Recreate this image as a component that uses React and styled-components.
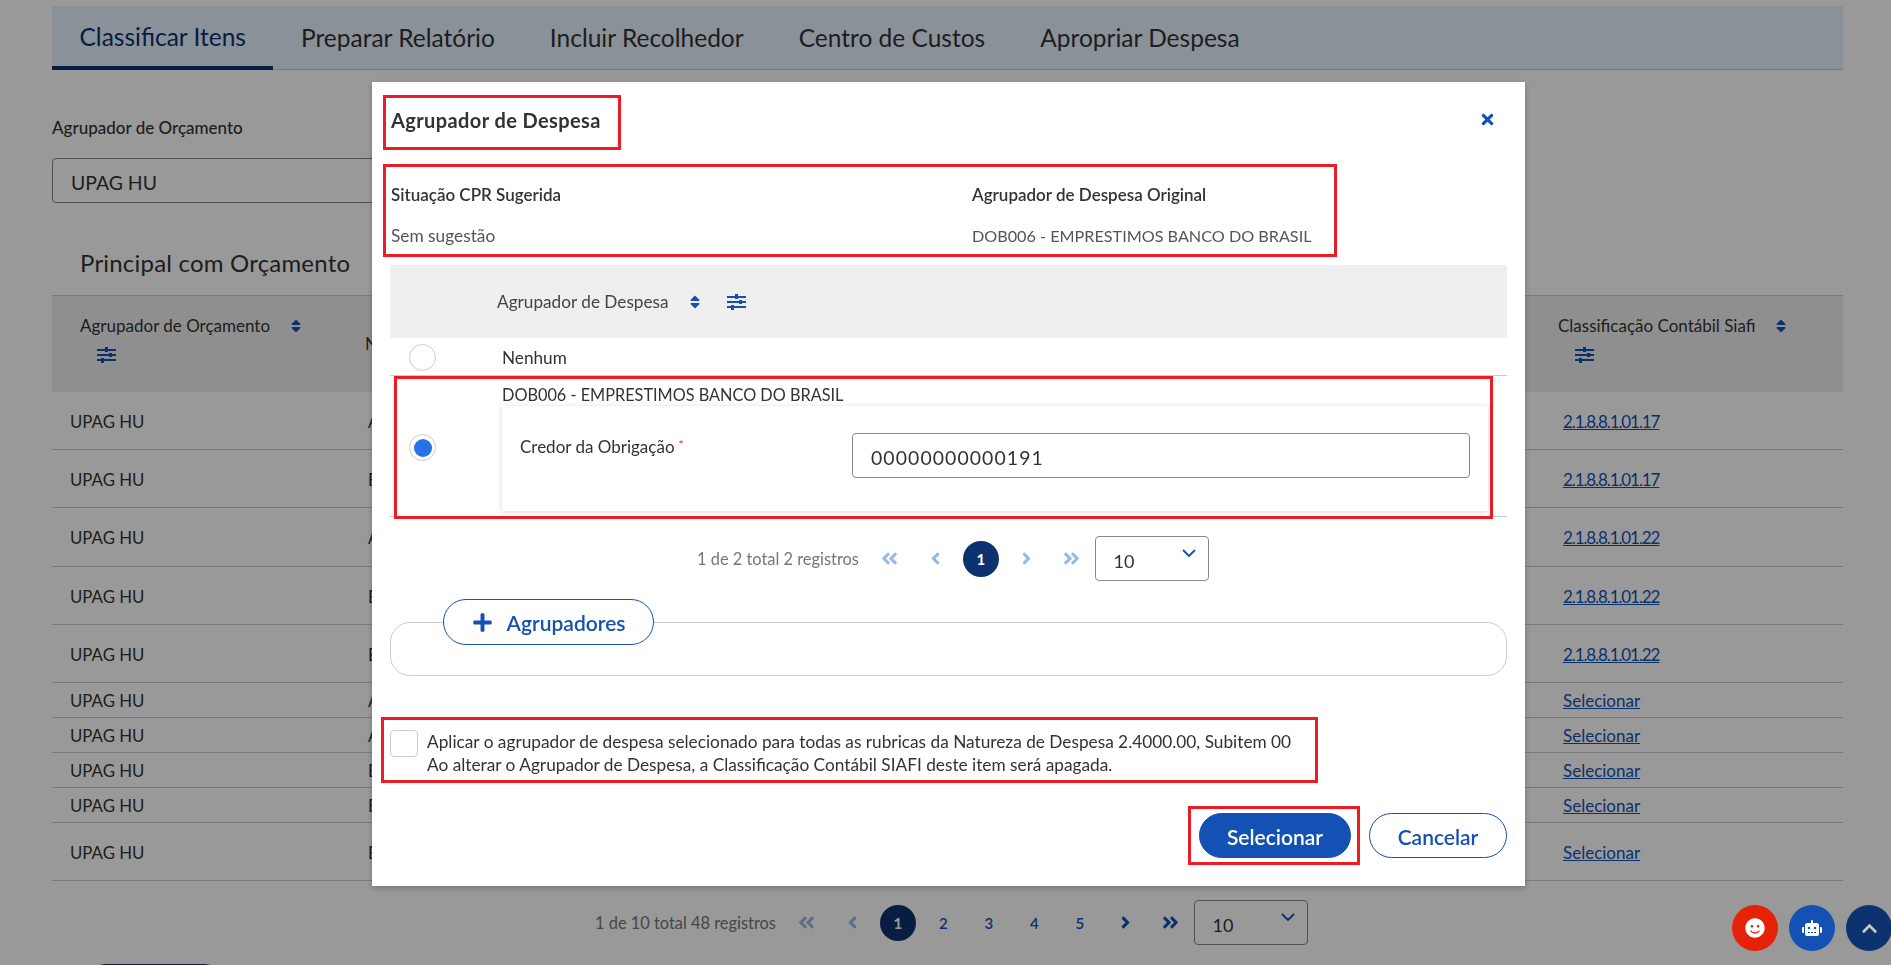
import React from "react";
import styled, { createGlobalStyle } from "styled-components";
import { FaAngleDoubleLeft, FaAngleDoubleRight, FaAngleLeft, FaAngleRight, FaChevronUp, FaPlus, FaRobot, FaSmile, FaSort, FaTimes } from "react-icons/fa";

const GlobalStyle = createGlobalStyle`
html, body {
    margin: 0;
    height: 100%;
    overflow: hidden;
    background: #fff;
}
* {
    box-sizing: border-box;
}
body, input, button {
    font-family: "Lato", "Open Sans", sans-serif;
    color: #333;
}
`

const BLUE = "#1351b4";
const RED = "#ed1c24";

const Page = styled.div`
width: 1891px;
height: 965px;
overflow: hidden;
padding: 6px 48px 0 52px;
`

const TabBar = styled.div`
display: flex;
height: 64px;
background: #e6f2fe;
border-bottom: 1px solid #ccc;
`

const Tab = styled.div`
display: flex;
align-items: center;
height: 64px;
padding: 0 27.5px ${props => props.$active ? "0" : "1px"};
font-size: 24.5px;
color: ${props => props.$active ? "#0c326f" : "#333"};
border-bottom: ${props => props.$active ? "4px solid #0c326f" : "none"};
`

const FieldLabel = styled.div`
margin-top: 47px;
font-size: 17px;
line-height: 22px;
font-weight: 500;
`

const TextBox = styled.div`
display: flex;
align-items: center;
width: 500px;
height: 45px;
margin-top: 19px;
padding: 3px 0 0 18px;
font-size: 19.4px;
border: 1px solid #888;
border-radius: 4px;
`

const SectionTitle = styled.h2`
margin: 46px 0 18px 28px;
font-size: 24px;
line-height: 28px;
font-weight: 400;
letter-spacing: 0.2px;
`

const HeadRow = styled.div`
display: grid;
grid-template-columns: 316px 1fr 313px;
height: 97px;
background: #efefef;
border-top: 1px solid #ccc;
font-size: 17px;
`

const HeadCell = styled.div`
padding: 20px 0 0 28px;
line-height: 20px;
`

const HeadPeek = styled.div`
margin: 38px 0 0 -3px;
line-height: 20px;
`

const SortMark = styled(FaSort)`
color: ${BLUE};
font-size: 16px;
vertical-align: -2px;
margin-left: 18px;
`

const FilterWrap = styled.div`
margin: 11px 0 0 17px;
height: 16px;
`

const Row = styled.div`
display: grid;
grid-template-columns: 316px 1fr 313px;
align-items: center;
height: ${props => props.$tall ? "58.2px" : "35px"};
padding-top: 2px;
border-bottom: 1px solid #ccc;
font-size: 16.8px;
`

const Cell = styled.div`
padding-left: 18px;
`

const CellPeek = styled.div`
padding-left: 0;
`

const CellLink = styled.a`
padding-left: 33px;
color: ${BLUE};
text-decoration: underline;
font-size: 17px;
letter-spacing: ${props => props.$code ? "-1.1px" : "0"};
`

const Pager = styled.div`
display: flex;
align-items: center;
height: 45px;
margin: ${props => props.$margin};
font-size: 16.4px;
`

const PagerInfo = styled.div`
width: ${props => props.$width};
color: #777;
`

const PagerSlot = styled.div`
display: flex;
align-items: center;
justify-content: center;
width: 45.5px;
font-size: ${props => props.$arrow ? "19px" : "15px"};
font-weight: 600;
color: ${props => props.$faded ? "#9ab8e4" : BLUE};
`

const PageDot = styled.div`
display: flex;
align-items: center;
justify-content: center;
width: 36px;
height: 36px;
border-radius: 50%;
background: #0c326f;
color: #fff;
font-size: 15px;
font-weight: 700;
`

const SizeSelect = styled.div`
display: flex;
justify-content: space-between;
width: 114px;
height: 45px;
padding: 0 12px 0 18px;
border: 1px solid #888;
border-radius: 4px;
font-size: 18px;
line-height: 48px;
`

const Chevron = styled.svg`
width: 14px;
height: 8px;
margin-top: 12px;
`

const BottomButton = styled.div`
width: 138px;
height: 40px;
margin: 19px 0 0 34px;
border-radius: 20px;
background: #0c326f;
`

const Overlay = styled.div`
position: fixed;
inset: 0;
padding: 82px 0 0 372px;
background: rgba(0, 0, 0, 0.4);
`

const Modal = styled.div`
width: 1153px;
height: 804px;
padding: 0 18px;
background: #fff;
box-shadow: 0 2px 6px rgba(0, 0, 0, 0.25);
`

const ModalHeader = styled.div`
display: flex;
justify-content: space-between;
align-items: flex-start;
padding: 13px 11px 0 0;
`

const TitleBox = styled.div`
display: flex;
align-items: center;
width: 238px;
height: 55px;
margin-left: -7px;
padding: 0 0 6px 5px;
border: 3px solid ${RED};
font-size: 20px;
font-weight: 700;
letter-spacing: 0.4px;
white-space: nowrap;
`

const CloseIcon = styled(FaTimes)`
margin-top: 16px;
color: ${BLUE};
font-size: 17px;
`

const InfoBox = styled.div`
display: grid;
grid-template-columns: 581px 1fr;
grid-template-rows: 41px 41px;
align-items: center;
width: 954px;
height: 93px;
margin: 14px 0 0 -7px;
padding: 7px 0 0 5px;
border: 3px solid ${RED};
`

const InfoLabel = styled.div`
font-size: 17px;
font-weight: 600;
`

const InfoValue = styled.div`
font-size: ${props => props.$caps ? "16.2px" : "17.3px"};
color: #555;
`

const PickHead = styled.div`
display: flex;
align-items: center;
height: 73px;
margin-top: 8px;
padding-left: 107px;
background: #efefef;
font-size: 17.2px;
color: #444;
`

const FilterGap = styled.span`
margin-left: 24px;
display: inline-flex;
`

const PickRow = styled.div`
display: flex;
align-items: center;
height: 38px;
padding: 1px 0 0 19px;
border-bottom: 1px solid #ccc;
font-size: 17.2px;
`

const Radio = styled.div`
display: flex;
align-items: center;
justify-content: center;
flex: none;
width: 27px;
height: 27px;
border: 1px solid #ccc;
border-radius: 50%;
background: #fff;
`

const RadioDot = styled.div`
width: 18px;
height: 18px;
border-radius: 50%;
background: #2670e8;
`

const PickLabel = styled.div`
margin-left: 66px;
`

const PickedRow = styled.div`
height: 141px;
border-bottom: 1px solid #ccc;
`

const PickedBox = styled.div`
display: flex;
align-items: center;
width: 1099px;
height: 143px;
margin-left: 4px;
padding: 0 2px 0 12px;
border: 3px solid ${RED};
`

const PickedBody = styled.div`
flex: 1;
margin-left: 66px;
align-self: flex-start;
padding-top: 5px;
`

const PickedName = styled.div`
font-size: 16.3px;
line-height: 22px;
`

const SubCard = styled.div`
display: flex;
align-items: flex-start;
height: 105px;
padding: 27px 18px 0;
background: #fff;
box-shadow: 0 1px 6px rgba(0, 0, 0, 0.16);
`

const SubLabel = styled.div`
width: 332px;
font-size: 17px;
line-height: 23px;
`

const Required = styled.span`
color: #e52207;
font-size: 12px;
vertical-align: 4px;
margin-left: 4px;
`

const SubInput = styled.div`
flex: 1;
display: flex;
align-items: center;
height: 45px;
padding: 3px 0 0 18px;
border: 1px solid #888;
border-radius: 4px;
font-size: 19.4px;
letter-spacing: 1.1px;
`

const GroupField = styled.div`
height: 54px;
margin-top: 41px;
padding-left: 52px;
border: 1px solid #ccc;
border-radius: 20px;
`

const AddButton = styled.button`
display: flex;
align-items: center;
justify-content: center;
gap: 14px;
width: 211px;
height: 46px;
margin-top: -24px;
background: #fff;
border: 1px solid ${BLUE};
border-radius: 23px;
color: ${BLUE};
font-size: 21px;
font-weight: 600;
`

const ApplyBox = styled.div`
display: flex;
gap: 9px;
width: 937px;
height: 66px;
margin: 41px 0 0 -9px;
padding: 10px 0 0 6px;
border: 3px solid ${RED};
font-size: 17.25px;
line-height: 23px;
`

const CheckSquare = styled.div`
flex: none;
width: 28px;
height: 27px;
border: 1px solid #ccc;
border-radius: 4px;
`

const ModalFooter = styled.div`
display: flex;
justify-content: flex-end;
align-items: center;
gap: 9px;
margin-top: 23px;
`

const PrimaryBox = styled.div`
padding: 4px 6px 4px 8px;
border: 3px solid ${RED};
`

const PillButton = styled.button`
width: ${props => props.$primary ? "152px" : "138px"};
height: 45px;
display: block;
padding-top: 2px;
border: 1px solid ${BLUE};
border-radius: 23px;
background: ${props => props.$primary ? BLUE : "#fff"};
color: ${props => props.$primary ? "#fff" : BLUE};
font-size: 21px;
font-weight: 600;
`

const FabGroup = styled.div`
position: fixed;
top: 905px;
right: -1px;
display: flex;
gap: 11px;
`

const Fab = styled.div`
display: flex;
align-items: center;
justify-content: center;
width: 46px;
height: 46px;
border-radius: 50%;
background: ${props => props.$bg};
color: ${props => props.$fg || "#fff"};
font-size: ${props => props.$size || "20px"};
`

const FilterIcon = ({ color = BLUE }) => (
    <svg width="19" height="16" viewBox="0 0 19 16" fill={color}>
        <rect x="0" y="2" width="19" height="2" />
        <rect x="0" y="7" width="19" height="2" />
        <rect x="0" y="12" width="19" height="2" />
        <rect x="8" y="0" width="3" height="5" />
        <rect x="12" y="6" width="3" height="4" />
        <rect x="4" y="11" width="3" height="5" />
    </svg>
)

const ChevronDown = () => (
    <Chevron viewBox="0 0 14 8" fill="none" stroke={BLUE} strokeWidth="1.8">
        <path d="M1 1l6 6 6-6" />
    </Chevron>
)

const rows = [
    { peek: "A", value: "2.1.8.8.1.01.17", tall: true, code: true },
    { peek: "E", value: "2.1.8.8.1.01.17", tall: true, code: true },
    { peek: "A", value: "2.1.8.8.1.01.22", tall: true, code: true },
    { peek: "E", value: "2.1.8.8.1.01.22", tall: true, code: true },
    { peek: "E", value: "2.1.8.8.1.01.22", tall: true, code: true },
    { peek: "A", value: "Selecionar" },
    { peek: "A", value: "Selecionar" },
    { peek: "E", value: "Selecionar" },
    { peek: "E", value: "Selecionar" },
    { peek: "E", value: "Selecionar", tall: true },
]

const tabs = ["Classificar Itens", "Preparar Relatório", "Incluir Recolhedor", "Centro de Custos", "Apropriar Despesa"];

const App = () => {
    return (
        <>
            <GlobalStyle />
            <Page>
                <TabBar>
                    {tabs.map((tab, i) => <Tab key={tab} $active={i === 0}>{tab}</Tab>)}
                </TabBar>

                <FieldLabel>Agrupador de Orçamento</FieldLabel>
                <TextBox>UPAG HU</TextBox>

                <SectionTitle>Principal com Orçamento</SectionTitle>

                <HeadRow>
                    <HeadCell>
                        Agrupador de Orçamento<SortMark />
                        <FilterWrap><FilterIcon /></FilterWrap>
                    </HeadCell>
                    <HeadPeek>N</HeadPeek>
                    <HeadCell>
                        Classificação Contábil Siafi<SortMark />
                        <FilterWrap><FilterIcon /></FilterWrap>
                    </HeadCell>
                </HeadRow>

                {rows.map((row, i) => (
                    <Row key={i} $tall={row.tall}>
                        <Cell>UPAG HU</Cell>
                        <CellPeek>{row.peek}</CellPeek>
                        <CellLink $code={row.code}>{row.value}</CellLink>
                    </Row>
                ))}

                <Pager $margin="19px 0 0 543px">
                    <PagerInfo $width="189px">1 de 10 total 48 registros</PagerInfo>
                    <PagerSlot $arrow $faded><FaAngleDoubleLeft /></PagerSlot>
                    <PagerSlot $arrow $faded><FaAngleLeft /></PagerSlot>
                    <PagerSlot><PageDot>1</PageDot></PagerSlot>
                    <PagerSlot>2</PagerSlot>
                    <PagerSlot>3</PagerSlot>
                    <PagerSlot>4</PagerSlot>
                    <PagerSlot>5</PagerSlot>
                    <PagerSlot $arrow><FaAngleRight /></PagerSlot>
                    <PagerSlot $arrow><FaAngleDoubleRight /></PagerSlot>
                    <SizeSelect>10<ChevronDown /></SizeSelect>
                </Pager>

                <BottomButton />
            </Page>

            <Overlay>
                <Modal>
                    <ModalHeader>
                        <TitleBox>Agrupador de Despesa</TitleBox>
                        <CloseIcon />
                    </ModalHeader>

                    <InfoBox>
                        <InfoLabel>Situação CPR Sugerida</InfoLabel>
                        <InfoLabel>Agrupador de Despesa Original</InfoLabel>
                        <InfoValue>Sem sugestão</InfoValue>
                        <InfoValue $caps>DOB006 - EMPRESTIMOS BANCO DO BRASIL</InfoValue>
                    </InfoBox>

                    <PickHead>
                        Agrupador de Despesa<SortMark />
                        <FilterGap><FilterIcon /></FilterGap>
                    </PickHead>

                    <PickRow>
                        <Radio />
                        <PickLabel>Nenhum</PickLabel>
                    </PickRow>

                    <PickedRow>
                        <PickedBox>
                            <Radio><RadioDot /></Radio>
                            <PickedBody>
                                <PickedName>DOB006 - EMPRESTIMOS BANCO DO BRASIL</PickedName>
                                <SubCard>
                                    <SubLabel>Credor da Obrigação<Required>*</Required></SubLabel>
                                    <SubInput>00000000000191</SubInput>
                                </SubCard>
                            </PickedBody>
                        </PickedBox>
                    </PickedRow>

                    <Pager $margin="19px 0 0 307px">
                        <PagerInfo $width="170px">1 de 2 total 2 registros</PagerInfo>
                        <PagerSlot $arrow $faded><FaAngleDoubleLeft /></PagerSlot>
                        <PagerSlot $arrow $faded><FaAngleLeft /></PagerSlot>
                        <PagerSlot><PageDot>1</PageDot></PagerSlot>
                        <PagerSlot $arrow $faded><FaAngleRight /></PagerSlot>
                        <PagerSlot $arrow $faded><FaAngleDoubleRight /></PagerSlot>
                        <SizeSelect>10<ChevronDown /></SizeSelect>
                    </Pager>

                    <GroupField>
                        <AddButton><FaPlus />Agrupadores</AddButton>
                    </GroupField>

                    <ApplyBox>
                        <CheckSquare />
                        <div>
                            Aplicar o agrupador de despesa selecionado para todas as rubricas da Natureza de Despesa 2.4000.00, Subitem 00
                            <br />
                            Ao alterar o Agrupador de Despesa, a Classificação Contábil SIAFI deste item será apagada.
                        </div>
                    </ApplyBox>

                    <ModalFooter>
                        <PrimaryBox><PillButton $primary>Selecionar</PillButton></PrimaryBox>
                        <PillButton>Cancelar</PillButton>
                    </ModalFooter>
                </Modal>
            </Overlay>

            <FabGroup>
                <Fab $bg="#e52207" $size="20px"><FaSmile /></Fab>
                <Fab $bg="#1351b4"><FaRobot /></Fab>
                <Fab $bg="#0c326f" $fg="#c9c9c9" $size="17px"><FaChevronUp /></Fab>
            </FabGroup>
        </>
    )
}

export default App;
